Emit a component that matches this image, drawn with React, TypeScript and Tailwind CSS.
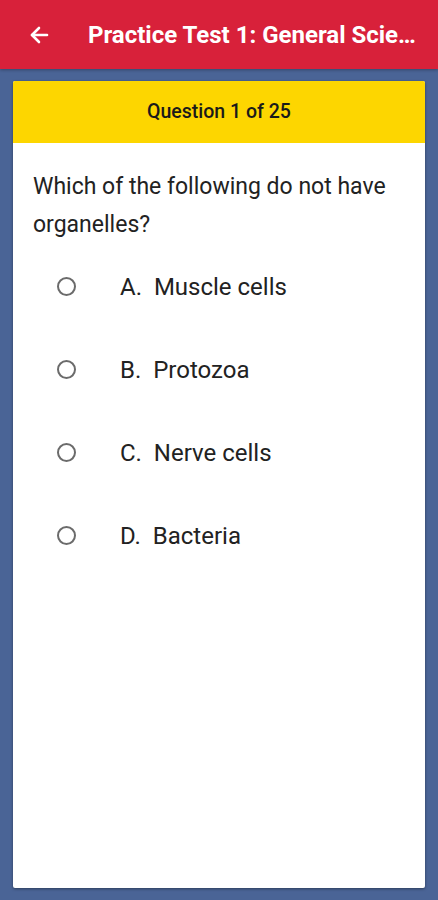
import React from "react";

const options = ["A.  Muscle cells", "B.  Protozoa", "C.  Nerve cells", "D.  Bacteria"];

export default function App() {
  return (
    <div className="w-[438px] h-[900px] bg-[#4a6496] flex flex-col" style={{ fontFamily: "Roboto, 'Liberation Sans', sans-serif" }}>
      <div className="h-[69px] bg-[#d8213a] flex items-center shrink-0 shadow-[0_1px_3px_rgba(0,0,0,0.3)]">
        <div className="w-[88px] flex items-center pl-[27px]">
          <svg width="24" height="24" viewBox="0 0 24 24" fill="none" stroke="white" strokeWidth="2.6" strokeLinecap="round" strokeLinejoin="round">
            <path d="M20 12H5" />
            <path d="M12 5l-7 7 7 7" />
          </svg>
        </div>
        <div className="text-white font-bold text-[24px] whitespace-nowrap overflow-hidden text-ellipsis w-[330px]">
          Practice Test 1: General Science
        </div>
      </div>
      <div className="flex-1 px-[13px] pt-[12px] pb-[12px] flex">
        <div className="flex-1 bg-white rounded-[2px] shadow-[0_1px_3px_rgba(0,0,0,0.4)] flex flex-col overflow-hidden">
          <div className="h-[62px] bg-[#fdd600] flex items-center justify-center text-[19.5px] font-medium text-[#1a1a1a]">
            Question 1 of 25
          </div>
          <div className="px-[20px] pt-[25px] text-[23px] leading-[38px] text-[#222]">
            Which of the following do not have organelles?
          </div>
          <div className="flex flex-col pt-[1px]">
            {options.map((o) => (
              <div key={o} className="h-[83px] flex items-center">
                <div className="w-[107px] flex justify-center">
                  <div className="w-[19px] h-[19px] rounded-full border-[2px] border-[#6b6b6b]" />
                </div>
                <div className="text-[24px] text-[#222] whitespace-pre">{o}</div>
              </div>
            ))}
          </div>
        </div>
      </div>
    </div>
  );
}
